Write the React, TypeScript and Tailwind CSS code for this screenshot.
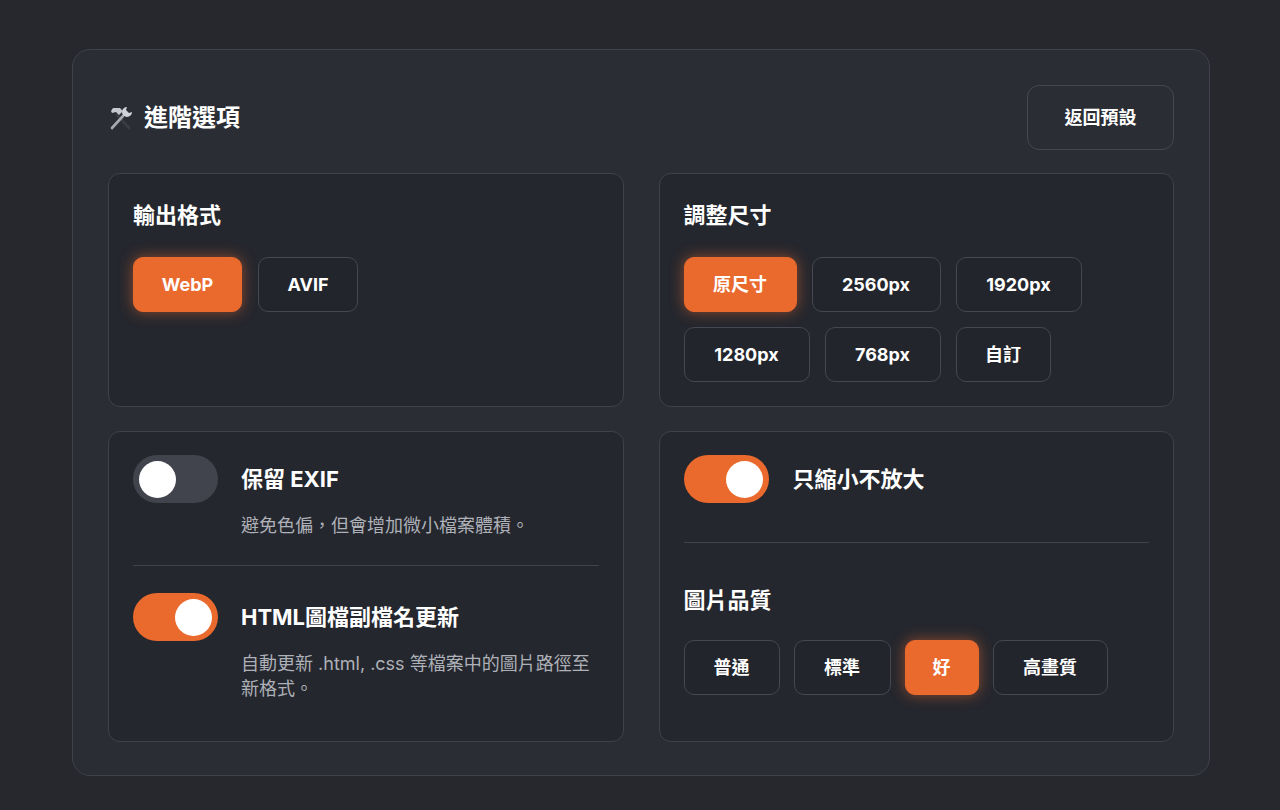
import React, { useState } from "react";

const F = { fontFamily: '"Inter","Noto Sans CJK TC",sans-serif' };

function Btn({ label, active, w, onClick }: { label: string; active?: boolean; w: string; onClick?: () => void }) {
  return (
    <button
      onClick={onClick}
      className={`${w} h-[55px] rounded-[10px] text-[18px] font-bold text-white flex items-center justify-center ${
        active
          ? "bg-[#ea692d] shadow-[0_0_14px_rgba(234,105,45,0.55)] border border-[#ea692d]"
          : "bg-[#23252c] border border-[#454852]"
      }`}
    >
      {label}
    </button>
  );
}

function Toggle({ on, onClick }: { on: boolean; onClick: () => void }) {
  return (
    <button
      onClick={onClick}
      className={`w-[85px] h-[48px] rounded-full shrink-0 flex items-center px-[6px] ${
        on ? "bg-[#ea692d] justify-end" : "bg-[#41444d] justify-start"
      }`}
    >
      <span className="w-[37px] h-[37px] rounded-full bg-white block" />
    </button>
  );
}

function Tools() {
  return (
    <svg width="26" height="26" viewBox="0 0 26 26">
      <path d="M21 23 L9 10" stroke="#3a3c42" strokeWidth="3" strokeLinecap="round" />
      <path d="M5 3 L12 3 L15 6 L11 10 L8 7 L4 8 L3 6 Z" fill="#c4c7cd" />
      <path d="M4 23 L15 11" stroke="#a6a9b0" strokeWidth="2.6" strokeLinecap="round" />
      <path d="M19 2 A5 5 0 1 0 24 7 L21 8 L18 5 Z" fill="#d0d3d8" />
    </svg>
  );
}

export default function App() {
  const [fmt, setFmt] = useState("WebP");
  const [size, setSize] = useState("原尺寸");
  const [q, setQ] = useState("好");
  const [exif, setExif] = useState(false);
  const [html, setHtml] = useState(true);
  const [shrink, setShrink] = useState(true);
  const card = "rounded-[12px] border border-[#3f424b] bg-[#25272e] p-6";
  return (
    <div style={F} className="w-[1280px] h-[810px] bg-[#26282e] pt-[49px] pl-[72px]">
      <div className="w-[1138px] h-[727px] rounded-[18px] border border-[#3f424b] bg-[#2b2d35] px-[35px] pt-[35px]">
        <div className="flex items-center justify-between h-[65px]">
          <div className="flex items-center gap-[10px]">
            <Tools />
            <span className="text-[24px] font-bold text-white">進階選項</span>
          </div>
          <button className="w-[147px] h-[65px] rounded-[12px] border border-[#454852] bg-[#2b2d35] text-white text-[18px] font-bold">
            返回預設
          </button>
        </div>
        <div className="grid grid-cols-2 gap-x-[35px] gap-y-[24px] mt-[23px]">
          <div className={`${card} h-[234px]`}>
            <div className="text-[22px] font-bold text-white leading-[30px] mt-[2px]">輸出格式</div>
            <div className="flex gap-[16px] mt-[27px]">
              {[["WebP", "w-[109px]"], ["AVIF", "w-[100px]"]].map(([l, w]) => (
                <Btn key={l} label={l} w={w} active={fmt === l} onClick={() => setFmt(l)} />
              ))}
            </div>
          </div>
          <div className={`${card} h-[234px]`}>
            <div className="text-[22px] font-bold text-white leading-[30px] mt-[2px]">調整尺寸</div>
            <div className="flex flex-wrap gap-x-[15px] gap-y-[15px] mt-[27px] w-[420px]">
              {[["原尺寸", "w-[113px]"], ["2560px", "w-[129px]"], ["1920px", "w-[126px]"], ["1280px", "w-[126px]"], ["768px", "w-[116px]"], ["自訂", "w-[95px]"]].map(([l, w]) => (
                <Btn key={l} label={l} w={w} active={size === l} onClick={() => setSize(l)} />
              ))}
            </div>
          </div>
          <div className={`${card} h-[311px] pt-[23px]`}>
            <div className="flex gap-[23px]">
              <Toggle on={exif} onClick={() => setExif(!exif)} />
              <div>
                <div className="text-[22px] font-bold text-white leading-[48px]">保留 EXIF</div>
                <div className="text-[18px] text-[#aeb1b8] mt-[10px] leading-[25px]">避免色偏，但會增加微小檔案體積。</div>
              </div>
            </div>
            <div className="h-px bg-[#40434c] mt-[27px] mb-[27px]" />
            <div className="flex gap-[23px]">
              <Toggle on={html} onClick={() => setHtml(!html)} />
              <div>
                <div className="text-[22px] font-bold text-white leading-[48px]">HTML圖檔副檔名更新</div>
                <div className="text-[18px] text-[#aeb1b8] mt-[10px] leading-[25px]">
                  自動更新 .html, .css 等檔案中的圖片路徑至<br />新格式。
                </div>
              </div>
            </div>
          </div>
          <div className={`${card} h-[311px] pt-[23px]`}>
            <div className="flex gap-[24px] items-center">
              <Toggle on={shrink} onClick={() => setShrink(!shrink)} />
              <div className="text-[22px] font-bold text-white">只縮小不放大</div>
            </div>
            <div className="h-px bg-[#40434c] mt-[39px]" />
            <div className="text-[22px] font-bold text-white leading-[30px] mt-[42px]">圖片品質</div>
            <div className="flex gap-[14px] mt-[25px]">
              {[["普通", "w-[96px]"], ["標準", "w-[97px]"], ["好", "w-[74px]"], ["高畫質", "w-[115px]"]].map(([l, w]) => (
                <Btn key={l} label={l} w={w} active={q === l} onClick={() => setQ(l)} />
              ))}
            </div>
          </div>
        </div>
      </div>
    </div>
  );
}
